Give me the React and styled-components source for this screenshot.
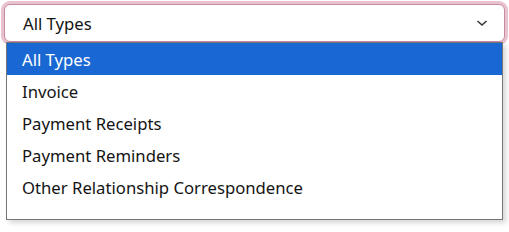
import React from "react";
import styled, { createGlobalStyle } from "styled-components";

const Global = createGlobalStyle`
  html, body { margin: 0; padding: 0; background: #ffffff; }
  body { font-family: "Noto Sans", "Open Sans", sans-serif; }
`;

const Page = styled.div`
  width: 509px;
  height: 232px;
  padding: 4px 4px 0 4px;
  box-sizing: border-box;
`;

const Field = styled.div`
  position: relative;
`;

const SelectBox = styled.div`
  box-sizing: border-box;
  height: 38px;
  width: 501px;
  border: 1px solid #c98aa0;
  border-radius: 6px;
  box-shadow: 0 0 0 3px #e8c2cf;
  background: #fff;
  display: flex;
  align-items: center;
  justify-content: space-between;
  padding: 0 16px 0 18px;
  font-size: 16.7px;
  color: #141414;
`;

const Chevron = styled.svg`
  width: 12px;
  height: 8px;
  display: block;
`;

const ListBox = styled.ul`
  position: absolute;
  top: 38px;
  left: 2px;
  width: 497px;
  height: 178px;
  box-sizing: border-box;
  margin: 0;
  padding: 0;
  list-style: none;
  background: #fff;
  border: 1px solid #767676;
  box-shadow: 3px 3px 5px rgba(0, 0, 0, 0.16);
`;

const Option = styled.li`
  height: 32px;
  display: flex;
  align-items: center;
  padding-left: 15px;
  font-size: 16.7px;
  color: ${(p) => (p.$selected ? "#ffffff" : "#141414")};
  background: ${(p) => (p.$selected ? "#1967d2" : "transparent")};
`;

const options = [
  "All Types",
  "Invoice",
  "Payment Receipts",
  "Payment Reminders",
  "Other Relationship Correspondence",
];

export default function App() {
  return (
    <>
      <Global />
      <Page>
        <Field>
          <SelectBox>
            <span>All Types</span>
            <Chevron viewBox="0 0 12 8">
              <path d="M1.5 2 L6 6 L10.5 2" fill="none" stroke="#333" strokeWidth="1.5" />
            </Chevron>
          </SelectBox>
          <ListBox>
            {options.map((o, i) => (
              <Option key={o} $selected={i === 0}>
                {o}
              </Option>
            ))}
          </ListBox>
        </Field>
      </Page>
    </>
  );
}
